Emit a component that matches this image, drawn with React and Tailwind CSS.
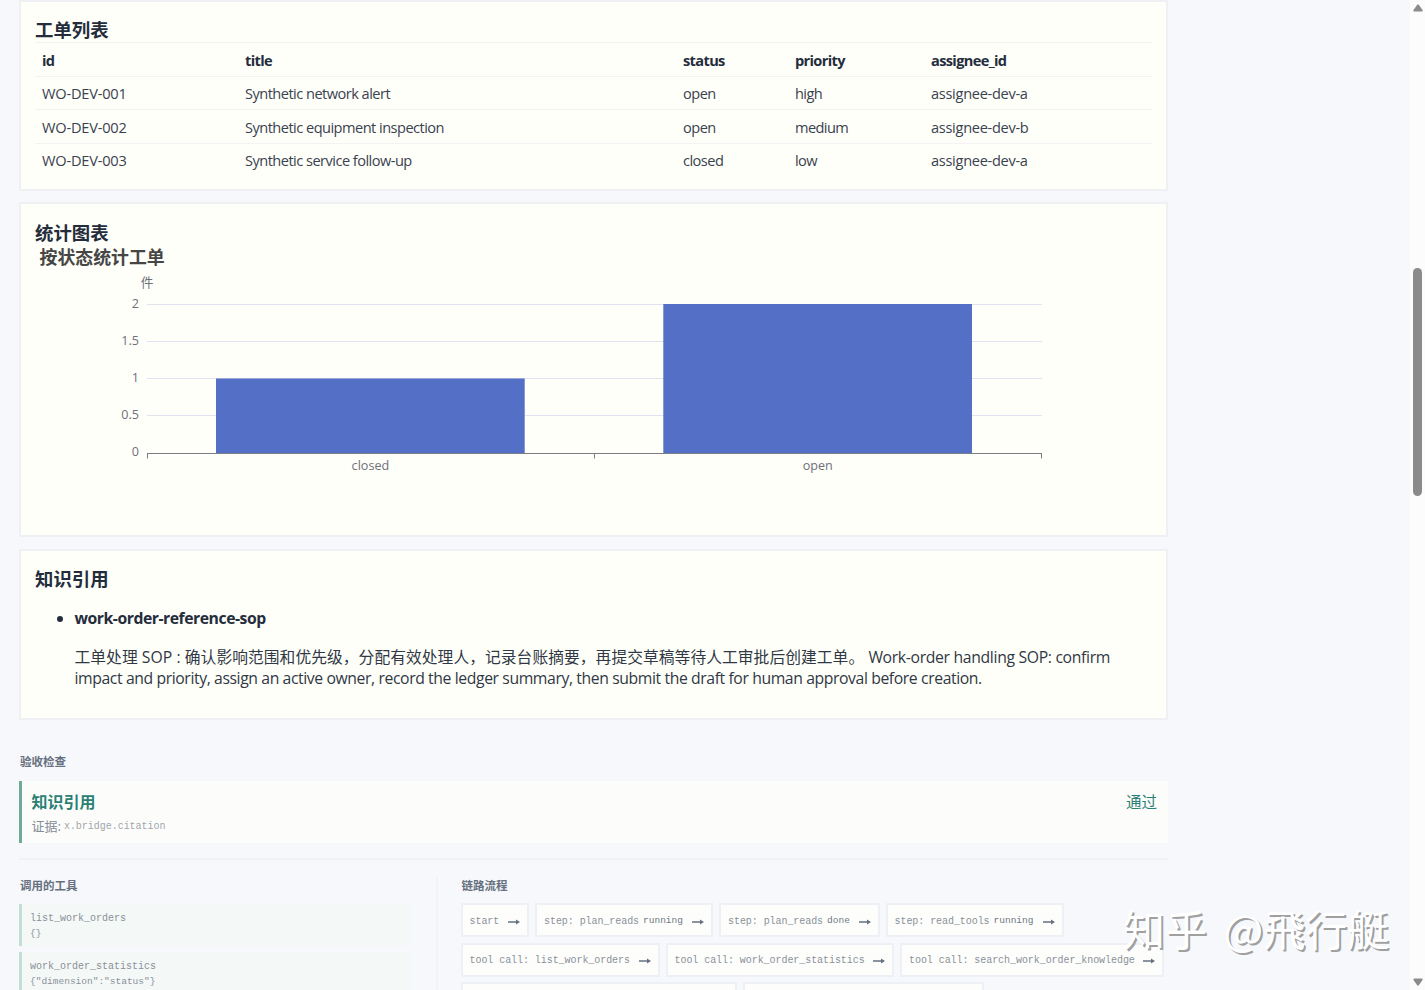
import React from 'react';

const orders = [
  { id: 'WO-DEV-001', title: 'Synthetic network alert', status: 'open', priority: 'high', assignee: 'assignee-dev-a' },
  { id: 'WO-DEV-002', title: 'Synthetic equipment inspection', status: 'open', priority: 'medium', assignee: 'assignee-dev-b' },
  { id: 'WO-DEV-003', title: 'Synthetic service follow-up', status: 'closed', priority: 'low', assignee: 'assignee-dev-a' },
];

const ticks = [
  { label: '2', y: 304.5 },
  { label: '1.5', y: 341.5 },
  { label: '1', y: 378.5 },
  { label: '0.5', y: 415.5 },
];

const bars = [
  { label: 'closed', x: 216, y: 378.5, height: 75 },
  { label: 'open', x: 663.3, y: 304, height: 149.5 },
];

const tools = [
  { name: 'list_work_orders', args: '{}' },
  { name: 'work_order_statistics', args: '{"dimension":"status"}' },
];

const trace = [
  [
    { text: 'start', width: 'w-[68.5px]' },
    { text: 'step: plan_reads', state: 'running', width: 'w-[178px]' },
    { text: 'step: plan_reads', state: 'done', width: 'w-[160.5px]' },
    { text: 'step: read_tools', state: 'running', width: 'w-[178px]' },
  ],
  [
    { text: 'tool call: list_work_orders', width: 'w-[199px]' },
    { text: 'tool call: work_order_statistics', width: 'w-[228.5px]' },
    { text: 'tool call: search_work_order_knowledge', width: 'w-[264px]' },
  ],
  [
    { width: 'w-[276px]' },
    { width: 'w-[241px]' },
  ],
];

const Panel = ({ title, className, children }) => (
  <section className={`border-2 border-[#eff0f3] bg-[#fffff9] px-[14px] ${className}`}>
    <h2 className="text-[18.4px] leading-6 font-bold">{title}</h2>
    {children}
  </section>
);

const OrderTable = () => (
  <table className="w-full table-fixed border-collapse text-left text-[14.6px] tracking-[-0.3px]">
    <colgroup>
      <col className="w-[203px]" />
      <col className="w-[438px]" />
      <col className="w-[112px]" />
      <col className="w-[136px]" />
      <col />
    </colgroup>
    <thead>
      <tr className="h-[33.6px] border-t border-[#f2f3f2] tracking-[-0.65px]">
        {['id', 'title', 'status', 'priority', 'assignee_id'].map((name) => (
          <th key={name} className="pt-[3px] pl-[7px] font-bold">{name}</th>
        ))}
      </tr>
    </thead>
    <tbody>
      {orders.map((order) => (
        <tr key={order.id} className="h-[33.6px] border-t border-[#f2f3f2] text-[#3a4250]">
          <td className="pt-0.5 pl-[7px] tracking-[-0.2px]">{order.id}</td>
          <td className="pt-0.5 pl-[7px] tracking-[-0.53px]">{order.title}</td>
          <td className="pt-0.5 pl-[7px] tracking-[-0.53px]">{order.status}</td>
          <td className="pt-0.5 pl-[7px] tracking-[-0.6px]">{order.priority}</td>
          <td className="pt-0.5 pl-[7px]">{order.assignee}</td>
        </tr>
      ))}
    </tbody>
  </table>
);

const StatusChart = () => (
  <svg viewBox="35 245 1116 280" className="block h-[280px] w-[1116px]" fontSize="12.6" fill="#6e7079">
    <text x="39.5" y="264" fontSize="17.9" fontWeight="700" fill="#464646">按状态统计工单</text>
    <text x="147" y="287" textAnchor="middle">件</text>
    {ticks.map((tick) => (
      <g key={tick.label}>
        <line x1="147" x2="1042" y1={tick.y} y2={tick.y} stroke="#e0e3ee" />
        <text x="139" y={tick.y + 3.3} textAnchor="end">{tick.label}</text>
      </g>
    ))}
    <text x="139" y="456.3" textAnchor="end">0</text>
    {bars.map((bar) => (
      <g key={bar.label}>
        <rect x={bar.x} y={bar.y} width="308.7" height={bar.height} fill="#5470c6" />
        <text x={bar.x + 154.4} y="470" textAnchor="middle">{bar.label}</text>
      </g>
    ))}
    <path d="M147 453.5H1042M147.5 453.5v5M594.5 453.5v5M1041.5 453.5v5" stroke="#7b7d84" fill="none" />
  </svg>
);

const Arrow = () => (
  <svg viewBox="0 0 12 8" className="mt-[3px] ml-auto h-2 w-3 shrink-0" fill="#66707f">
    <path d="M0 3.3h8V1.5L12 4 8 6.5V4.7H0z" />
  </svg>
);

const Step = ({ step }) => (
  <div className={`flex h-[34px] shrink-0 items-center border-2 border-[#edf0f4] bg-[#fdfefc] px-[7px] ${step.width}`}>
    {step.text && <span className="mt-0.5 tracking-[-0.06px] whitespace-pre">{step.text}</span>}
    {step.state && <span className="mt-px ml-1 text-[9.5px] leading-3 text-[#6f7783]">{step.state}</span>}
    {step.text && <Arrow />}
  </div>
);

const Scrollbar = () => (
  <div className="flex w-[15px] shrink-0 flex-col items-center bg-[#fcfcfc] pt-1 pb-1">
    <svg viewBox="0 0 10 8" className="h-2 w-[10px]" fill="#8b8b8b"><path d="M4 1q1-1.4 2 0l3.5 5q.5 1.5-1 1.5h-7q-1.5 0-1-1.5z" /></svg>
    <div className="mt-64 h-[228px] w-[9px] rounded-full bg-[#8b8b8b]" />
    <svg viewBox="0 0 10 8" className="mt-auto h-2 w-[10px]" fill="#8b8b8b"><path d="M4 7q1 1.4 2 0l3.5-5q.5-1.5-1-1.5h-7q-1.5 0-1 1.5z" /></svg>
  </div>
);

const App = () => {
  return (
    <div className="relative flex h-[990px] w-[1425px] overflow-hidden bg-[#f6f8fb] font-['Open_Sans','Noto_Sans_CJK_SC',sans-serif] text-[#242d3c]">
      <main className="ml-[19px] w-[1149px]">
        <Panel title="工单列表" className="h-[191px] pt-4">
          <OrderTable />
        </Panel>

        <Panel title="统计图表" className="mt-[11px] h-[335px] pt-[17px]">
          <StatusChart />
        </Panel>

        <Panel title="知识引用" className="mt-[11.5px] h-[171px] pt-4">
          <ul className="mt-[17.5px] list-disc pl-[39.5px] text-[15.75px] leading-[21px]">
            <li>
              <strong className="tracking-[-0.46px]">work-order-reference-sop</strong>
              <p className="mt-[17.5px] whitespace-nowrap text-[#303846]">
                <span className="tracking-[0.05px]">工单处理 SOP : 确认影响范围和优先级，分配有效处理人，记录台账摘要，再提交草稿等待人工审批后创建工单。 </span>
                <span className="tracking-[-0.33px]">Work-order handling SOP: confirm</span>
                <br />
                <span className="tracking-[-0.4px]">impact and priority, assign an active owner, record the ledger summary, then submit the draft for human approval before creation.</span>
              </p>
            </li>
          </ul>
        </Panel>

        <h3 className="mt-[34.5px] pl-px text-[11.5px] leading-4 font-bold text-[#667080]">验收检查</h3>
        <div className="mt-[11px] flex h-[62px] justify-between border-l-3 border-[#6fa99a] bg-[#fcfdfb] pt-[10px] pr-[11px] pl-[9.5px]">
          <div>
            <div className="text-base leading-[22px] font-bold text-[#2b8073]">知识引用</div>
            <div className="mt-px flex items-center text-[13px] leading-5 text-[#858d98]">
              证据:
              <code className="mt-[3px] ml-[3px] font-['Liberation_Mono',monospace] text-[10px] tracking-[-0.03px] text-[#a0a5ad]">x.bridge.citation</code>
            </div>
          </div>
          <div className="text-[15.5px] leading-[22px] text-[#2b8073]">通过</div>
        </div>

        <div className="mt-[14.5px] flex border-t-2 border-[#f0f2f4] pt-[17px] font-['Liberation_Mono',monospace] text-[10px] text-[#8a9099]">
          <div className="h-[120px] w-[419px] shrink-0 border-r-2 border-[#f1f3f5] pr-6">
            <h3 className="pl-px font-['Noto_Sans_CJK_SC',sans-serif] text-[11.5px] leading-4 font-bold text-[#667080]">调用的工具</h3>
            {tools.map((tool, i) => (
              <div key={tool.name} className={`h-[42px] border-l-3 border-[#c3dfd5] bg-[#f4f8f7] pt-[7px] pl-2 leading-[15px] ${i === 0 ? 'mt-[11px]' : 'mt-1.5'}`}>
                <div>{tool.name}</div>
                <div className="text-[9.5px]">{tool.args}</div>
              </div>
            ))}
          </div>
          <div className="ml-[22.5px] w-[705px]">
            <h3 className="pl-px font-['Noto_Sans_CJK_SC',sans-serif] text-[11.5px] leading-4 font-bold text-[#667080]">链路流程</h3>
            <div className="mt-[10.5px] flex flex-col gap-[5.5px]">
              {trace.map((row, i) => (
                <div key={i} className="flex gap-1.5">
                  {row.map((step, j) => (
                    <Step key={j} step={step} />
                  ))}
                </div>
              ))}
            </div>
          </div>
        </div>
      </main>

      <div className="ml-auto flex">
        <Scrollbar />
      </div>

      {/* Watermark */}
      <div className="absolute top-[898px] left-[1123px] font-['Noto_Sans_CJK_SC',sans-serif] text-[42px] leading-[60px] whitespace-nowrap text-white [text-shadow:2px_2px_0.5px_#a0a0a0] [word-spacing:7px]">
        知乎 @飛行艇
      </div>
    </div>
  );
};

export default App;
